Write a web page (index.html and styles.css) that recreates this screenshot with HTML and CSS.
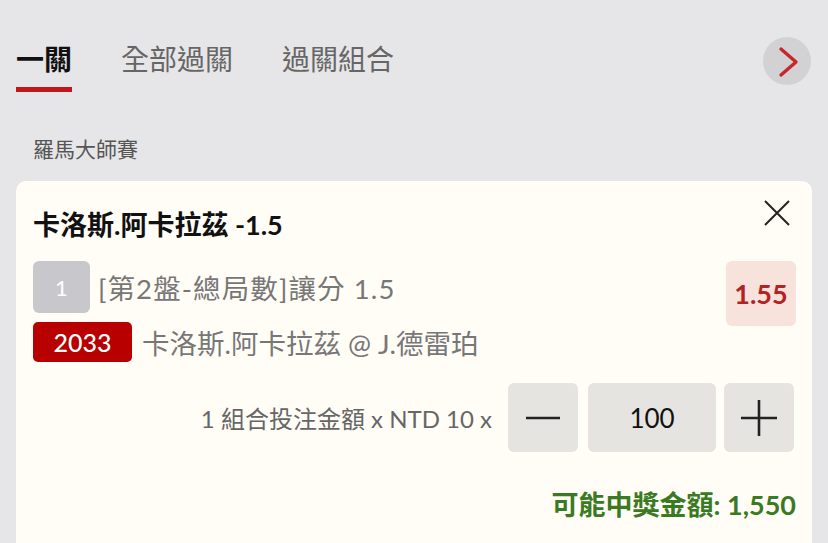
FILE: index.html
```html
<!DOCTYPE html>
<html lang="zh-Hant">
<head>
<meta charset="utf-8">
<link rel="stylesheet" href="styles.css">
</head>
<body>
<div class="tabs">
  <div class="tab active">一關</div>
  <div class="tab">全部過關</div>
  <div class="tab">過關組合</div>
  <div class="next">
    <svg width="48" height="48" viewBox="0 0 48 48"><path d="M18 12 L33 25 L18 38" fill="none" stroke="#c8262a" stroke-width="3.4" stroke-linecap="round" stroke-linejoin="round"/></svg>
  </div>
</div>
<div class="league">羅馬大師賽</div>
<div class="card">
  <div class="card-head">
    <div class="title">卡洛斯.阿卡拉茲 -1.5</div>
    <svg class="close" width="28" height="28" viewBox="0 0 28 28"><path d="M2 2 L26 26 M26 2 L2 26" stroke="#222" stroke-width="2" fill="none"/></svg>
  </div>
  <div class="sel">
    <div class="sel-main">
      <div class="row">
        <div class="num">1</div>
        <div class="market market-wide">[第2盤-總局數]讓分 1.5</div>
      </div>
      <div class="row row2">
        <div class="code">2033</div>
        <div class="market">卡洛斯.阿卡拉茲 @ J.德雷珀</div>
      </div>
    </div>
    <div class="odds">1.55</div>
  </div>
  <div class="stake">
    <div class="stake-label">1 組合投注金額 x NTD 10 x</div>
    <div class="btn">
      <svg width="36" height="36" viewBox="0 0 36 36"><path d="M1 18 H35" stroke="#222" stroke-width="2.6"/></svg>
    </div>
    <div class="amount">100</div>
    <div class="btn plus">
      <svg width="36" height="36" viewBox="0 0 36 36"><path d="M0 18 H36 M18 0 V36" stroke="#222" stroke-width="2.6"/></svg>
    </div>
  </div>
  <div class="win">可能中獎金額: 1,550</div>
</div>
</body>
</html>
```
FILE: styles.css
```css
* { box-sizing: border-box; }
html, body { margin: 0; padding: 0; }
body {
  background: #e6e6e8;
  font-family: Lato, "Noto Sans CJK TC", sans-serif;
  width: 828px;
  height: 543px;
  overflow: hidden;
}
.tabs {
  display: flex;
  align-items: flex-start;
  padding: 37px 17px 0 16px;
  gap: 49px;
  height: 124px;
}
.tab {
  font-size: 28px;
  line-height: 45px;
  color: #666;
  padding-bottom: 5px;
  border-bottom: 5px solid transparent;
}
.tab.active {
  color: #111;
  font-weight: 700;
  border-bottom-color: #c0161c;
}
.next {
  margin-left: auto;
  width: 48px;
  height: 48px;
  border-radius: 50%;
  background: #d2d2d4;
}
.next svg { display: block; }
.league {
  padding-left: 33px;
  font-size: 21px;
  line-height: 30px;
  color: #555;
  height: 47px;
  margin-top: 10px;
}
.card {
  margin: 0 16px;
  background: #fffdf6;
  border-radius: 10px 10px 0 0;
  padding: 24px 16px 0 17px;
  height: 362px;
}
.card-head {
  display: flex;
  justify-content: space-between;
  align-items: flex-start;
}
.title {
  font-size: 27px;
  font-weight: 700;
  color: #111;
  line-height: 40px;
}
.close { margin-top: -6px; margin-right: 5px; }
.sel {
  display: flex;
  justify-content: space-between;
  align-items: flex-start;
  margin-top: 16px;
}
.row { display: flex; align-items: center; }
.row2 { margin-top: 9px; }
.num {
  width: 57px;
  height: 52px;
  border-radius: 6px;
  background: #c8c8cc;
  color: #fff;
  font-size: 22px;
  display: flex;
  align-items: center;
  justify-content: center;
}
.market {
  font-size: 27.5px;
  color: #777;
  margin-left: 8px;
}
.market-wide { letter-spacing: 1.1px; }
.code {
  width: 99px;
  height: 40px;
  border-radius: 5px;
  background: #b80000;
  color: #fff;
  font-size: 25px;
  font-weight: 500;
  display: flex;
  align-items: center;
  justify-content: center;
  margin-right: 2px;
}
.odds {
  width: 70px;
  height: 65px;
  border-radius: 6px;
  background: #f8e2dc;
  color: #b42222;
  font-weight: 700;
  font-size: 27px;
  display: flex;
  align-items: center;
  justify-content: center;
}
.stake {
  display: flex;
  align-items: center;
  justify-content: flex-end;
  margin-top: 21px;
  padding-right: 2px;
}
.stake-label {
  font-size: 24px;
  color: #666;
  margin-right: 16px;
}
.btn, .amount {
  height: 69px;
  border-radius: 6px;
  background: #e6e4e0;
  display: flex;
  align-items: center;
  justify-content: center;
}
.btn { width: 70px; }
.amount { width: 128px; font-size: 26px; color: #111; margin: 0 8px 0 10px; }
.win {
  text-align: right;
  font-size: 27px;
  font-weight: 700;
  color: #3a7a22;
  margin-top: 32px;
}
```
